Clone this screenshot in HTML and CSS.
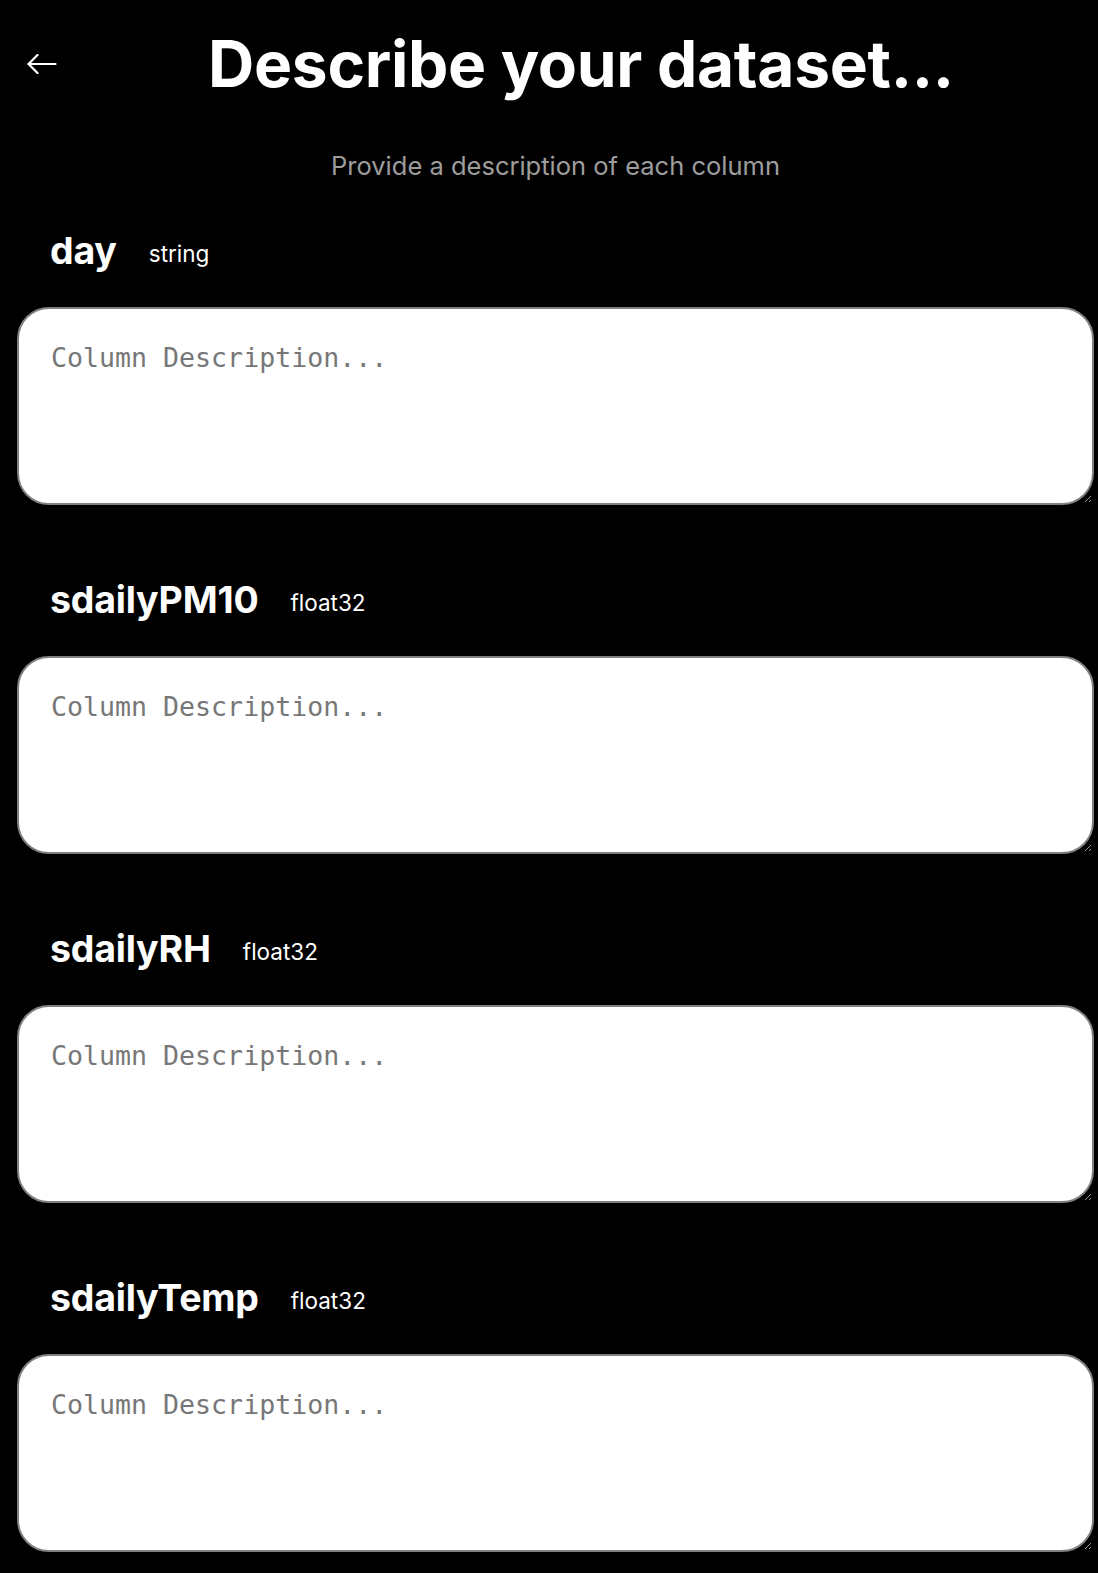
FILE: index.html
```html
<!DOCTYPE html>
<html lang="en">
<head>
<meta charset="utf-8">
<title>Describe your dataset</title>
<link rel="stylesheet" href="styles.css">
</head>
<body>
<header class="header">
  <button class="back" aria-label="Back">
    <svg width="30" height="20" viewBox="0 0 30 20" fill="none" stroke="#fff" stroke-width="2.2" stroke-linecap="round" stroke-linejoin="round">
      <path d="M28.5 10H1.5"/>
      <path d="M10.5 1L1.5 10L10.5 19"/>
    </svg>
  </button>
  <h1 class="title">Describe your dataset...</h1>
</header>
<p class="subtitle">Provide a description of each column</p>
<main class="fields">
  <section class="field">
    <div class="label-row"><span class="name">day</span><span class="type">string</span></div>
    <textarea class="desc" placeholder="Column Description..."></textarea>
  </section>
  <section class="field">
    <div class="label-row"><span class="name">sdailyPM10</span><span class="type">float32</span></div>
    <textarea class="desc" placeholder="Column Description..."></textarea>
  </section>
  <section class="field">
    <div class="label-row"><span class="name">sdailyRH</span><span class="type">float32</span></div>
    <textarea class="desc" placeholder="Column Description..."></textarea>
  </section>
  <section class="field">
    <div class="label-row"><span class="name">sdailyTemp</span><span class="type">float32</span></div>
    <textarea class="desc" placeholder="Column Description..."></textarea>
  </section>
</main>
</body>
</html>
```
FILE: styles.css
```css
html, body {
  margin: 0;
  background: #000;
  color: #fff;
  font-family: Inter, "Noto Sans", sans-serif;
}
body {
  overflow: hidden;
}
.header {
  display: flex;
  align-items: center;
  padding: 24px 0 0 16px;
}
.back {
  width: 48px;
  height: 48px;
  padding: 0 0 0 11px;
  border: 0;
  background: transparent;
  display: flex;
  align-items: center;
  cursor: pointer;
}
.title {
  flex: 1;
  margin: 0;
  text-align: center;
  font-size: 64px;
  font-weight: 700;
  line-height: 80px;
  letter-spacing: -0.3px;
}
.subtitle {
  margin: 47px 0 0;
  padding-left: 13px;
  text-align: center;
  font-size: 25.5px;
  line-height: 30px;
  color: #9d9d9d;
}
.fields {
  padding: 0 4px 0 17px;
  margin-top: 48px;
}
.field {
  margin-bottom: 73px;
}
.label-row {
  display: flex;
  align-items: baseline;
  gap: 32px;
  padding-left: 33px;
  height: 44px;
  line-height: 44px;
  margin-bottom: 34px;
}
.name {
  font-size: 37.5px;
  font-weight: 700;
  letter-spacing: -0.2px;
}
.type {
  font-size: 22.5px;
  line-height: 1;
  position: relative;
  top: -2px;
}
.desc {
  display: block;
  box-sizing: border-box;
  width: 100%;
  height: 198px;
  margin: 0;
  padding: 33px 32px;
  border: 2px solid #808080;
  border-radius: 32px;
  background: #fff;
  color: #222;
  font-family: "DejaVu Sans Mono", monospace;
  font-size: 26.6px;
  outline: none;
}
.desc::placeholder {
  color: #777;
}
```
